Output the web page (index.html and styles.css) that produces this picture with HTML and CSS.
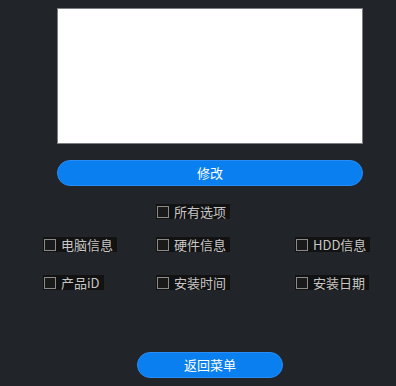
FILE: index.html
```html
<!DOCTYPE html>
<html lang="zh">
<head>
<meta charset="utf-8">
<link rel="stylesheet" href="styles.css">
</head>
<body>
<div class="page">
  <div class="editor"><textarea class="box"></textarea></div>
  <button class="btn wide">修改</button>
  <div class="opts">
    <div class="row first">
      <span class="cell"></span>
      <label class="opt"><span class="chk"></span><span class="txt">所有选项</span></label>
      <span class="cell"></span>
    </div>
    <div class="row second">
      <label class="opt"><span class="chk"></span><span class="txt">电脑信息</span></label>
      <label class="opt"><span class="chk"></span><span class="txt">硬件信息</span></label>
      <label class="opt"><span class="chk"></span><span class="txt">HDD信息</span></label>
    </div>
    <div class="row third">
      <label class="opt"><span class="chk"></span><span class="txt">产品iD</span></label>
      <label class="opt"><span class="chk"></span><span class="txt">安装时间</span></label>
      <label class="opt"><span class="chk"></span><span class="txt">安装日期</span></label>
    </div>
  </div>
  <div class="back"><button class="btn small">返回菜单</button></div>
</div>
</body>
</html>
```

FILE: styles.css
```css
html, body {
  margin: 0;
  padding: 0;
  background: #212529;
  width: 396px;
  height: 386px;
  overflow: hidden;
  font-family: "Noto Sans CJK SC", "Noto Sans", sans-serif;
}
.page {
  padding-top: 8px;
  display: flex;
  flex-direction: column;
}
.editor {
  margin-left: 57px;
  width: 306px;
  height: 136px;
}
.box {
  display: block;
  box-sizing: border-box;
  width: 306px;
  height: 136px;
  margin: 0;
  border: 1px solid #7a7d82;
  background: #ffffff;
  resize: none;
  outline: none;
}
.btn {
  box-sizing: border-box;
  height: 26px;
  border: 1px solid #2a8cf5;
  border-radius: 13px;
  background: #0a7ff0;
  color: #ffffff;
  font-family: "Noto Sans CJK SC", "Noto Sans", sans-serif;
  font-size: 13px;
  line-height: 22px;
  padding: 0;
  cursor: pointer;
}
.wide {
  margin-top: 16px;
  margin-left: 57px;
  width: 306px;
}
.opts {
  margin-left: 43px;
  display: flex;
  flex-direction: column;
}
.row {
  display: grid;
  grid-template-columns: 113px 139px 1fr;
  height: 15px;
  align-items: start;
}
.first { margin-top: 18px; }
.second { margin-top: 18px; }
.third { margin-top: 23px; }
.opt {
  justify-self: start;
  display: inline-flex;
  align-items: center;
  height: 15px;
  background: #121212;
  padding: 0 4px 0 1px;
  gap: 5px;
}
.chk {
  box-sizing: border-box;
  width: 12px;
  height: 12px;
  border: 1px solid #8a8a8a;
  background: #1a1a1a;
}
.txt {
  color: #c6c6c6;
  font-size: 13px;
  line-height: 15px;
}
.back {
  margin-top: 62px;
  display: flex;
  padding-left: 137px;
}
.small {
  width: 146px;
}
```
